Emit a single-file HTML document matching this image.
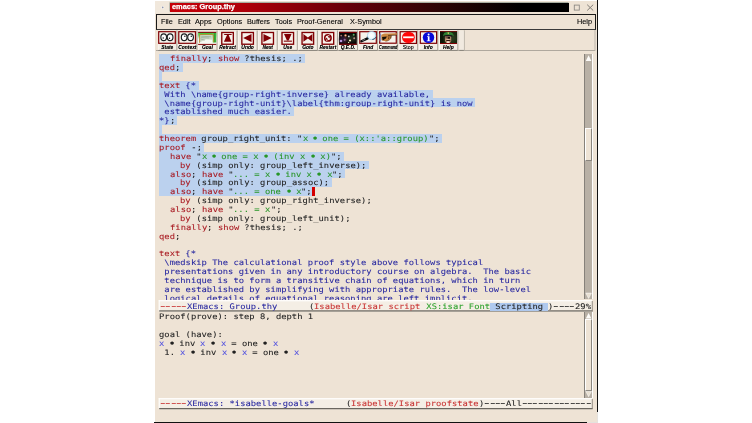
<!DOCTYPE html>
<html><head><meta charset="utf-8"><title>emacs: Group.thy</title>
<style>
html,body{margin:0;padding:0;background:#fff;}
body{width:752px;height:423px;overflow:hidden;position:relative;font-family:"DejaVu Sans Mono","Liberation Mono",monospace;}
#win{position:absolute;left:155px;top:1px;width:442px;height:420.7px;background:#eee3d5;}
#bR{position:absolute;left:597px;top:0;width:1.3px;height:411.6px;background:#111;}
#bR2{position:absolute;left:597px;top:411.6px;width:1.3px;height:11.4px;background:#e4e2de;}
#bB{position:absolute;left:154px;top:421.7px;width:432.7px;height:1.3px;background:#111;}
#bB2{position:absolute;left:586.7px;top:421.7px;width:11.6px;height:1.3px;background:#e4e2de;}
#title{position:absolute;left:169.5px;top:2.7px;width:399.4px;height:9.8px;background:linear-gradient(90deg,#c60008 0%,#b0000a 18%,#64000a 45%,#2c0404 68%,#000 88%,#000 100%);box-shadow:-0.6px -0.6px 0 #7a8a80;}
#ttext{position:absolute;left:171.6px;top:2.4px;height:10.5px;font:bold 7.4px/10.5px "Liberation Sans",sans-serif;color:#fff;white-space:pre;-webkit-text-stroke:0.25px #fff;}
#menu{position:absolute;left:156.4px;top:13.7px;width:437.6px;height:14.2px;border:1px solid #1a1a1a;border-bottom-color:#3a3a3a;box-sizing:content-box;background:#eee3d5;}
.mi{position:absolute;top:15px;height:13px;font:7.3px/13px "Liberation Sans",sans-serif;color:#000;white-space:pre;-webkit-text-stroke:0.1px #000;}
.ln{height:8.88px;line-height:8.88px;white-space:pre;font-size:8.84px;}
.ln span{display:inline-block;height:8.88px;vertical-align:top;}
.hl{background:#bbd1ee;margin-left:-0.5px;padding-left:0.5px;}
.nl{padding-right:2.5px;}
.cur{width:3px;background:#d40000;}
#top,#bot,.ml,.mi,#ttext{will-change:transform;}
#top{position:absolute;left:159.0px;top:53.85px;width:426px;height:246.15px;overflow:hidden;color:#222222;}
#bot{position:absolute;left:159.0px;top:311.65px;width:426px;color:#222222;}
.k,.b,.g,.n,.x,.mr,.mg,.mb{-webkit-text-stroke:0.08px;position:relative;top:0.2px;transform:scaleY(0.86) skewX(0.2deg);transform-origin:0 7px;}
.ln span.bu{width:4.2px;text-align:center;font-size:12px;text-indent:-1.6px;}
.k{color:#a81820;} .b{color:#2828a0;} .g{color:#289628;} .n{color:#222222;} .x{color:#5050e0;}
.ml{position:absolute;left:160px;height:9px;font-size:8.84px;line-height:9px;white-space:pre;color:#222222;}
.ml span{display:inline-block;height:9px;vertical-align:top;}
.ml span.d{transform:scaleX(1.5) scaleY(0.86);transform-origin:50% 7px;-webkit-text-stroke:0.3px;top:-1.0px;}
.ml .mh{height:8px;margin-top:0.5px;line-height:8px;top:0}
.ml .mh span{margin-top:-0.5px}
.mr{color:#c83232;} .mg{color:#2aa02a;} .mb{color:#2828a0;}
.mh{background:#aec8ee;}
.sb{position:absolute;left:584.2px;width:7.8px;background:#b8b0a5;border-left:1.2px solid #86817a;border-right:1.1px solid #fff;box-sizing:border-box;width:9px;}

.tl{position:absolute;top:44.9px;width:24.3px;text-align:center;font:italic bold 4.9px/5px "Liberation Sans",sans-serif;color:#000;white-space:pre;text-shadow:0 0 0.5px rgba(0,0,0,0.5);transform:translateZ(0);}
.thumb{position:absolute;left:0px;width:6.7px;background:#eee3d5;border-top:1px solid #fff;border-left:1px solid #fff;border-right:1px solid #8a857d;border-bottom:1px solid #8a857d;box-sizing:border-box;}
</style></head><body>
<div id="win"></div><div id="bR"></div><div id="bB"></div><div id="bR2"></div><div id="bB2"></div>
<div id="title"></div><div id="ttext">emacs: Group.thy</div>
<svg style="position:absolute;left:0;top:0" width="752" height="423" viewBox="0 0 752 423">
<rect x="155" y="1" width="14.3" height="12" fill="#f1e8dc"/><circle cx="162.7" cy="7.5" r="1.5" fill="#fbf8f4"/><circle cx="162.7" cy="7.4" r="0.85" fill="#8f95ab"/>
<rect x="574.3" y="5.1" width="5" height="5" fill="none" stroke="#8e8a84" stroke-width="0.9"/>
<path d="M587.2 4.7 L593.2 10.5 M593.2 4.7 L587.2 10.5" stroke="#807c76" stroke-width="1" fill="none"/>
</svg>
<div id="menu"></div>
<div class="mi" style="left:160.9px">File</div><div class="mi" style="left:177.8px">Edit</div><div class="mi" style="left:195.2px">Apps</div><div class="mi" style="left:216.9px">Options</div><div class="mi" style="left:246.7px">Buffers</div><div class="mi" style="left:274.5px">Tools</div><div class="mi" style="left:297.0px">Proof-General</div><div class="mi" style="left:349.8px">X-Symbol</div><div class="mi" style="left:576.5px">Help</div>
<svg style="position:absolute;left:0;top:0" width="752" height="423" viewBox="0 0 752 423">
<defs>
<linearGradient id="gg" x1="0" y1="0" x2="0" y2="1"><stop offset="0" stop-color="#38c838"/><stop offset="0.4" stop-color="#58d458"/><stop offset="1" stop-color="#f6f9f2"/></linearGradient>
<linearGradient id="gr" x1="0" y1="0" x2="1" y2="0"><stop offset="0" stop-color="#66d866"/><stop offset="0.6" stop-color="#2c9a2c"/><stop offset="1" stop-color="#49d049"/></linearGradient>
<radialGradient id="lens" cx="0.45" cy="0.45" r="0.6"><stop offset="0" stop-color="#ffffff"/><stop offset="0.6" stop-color="#f0fafe"/><stop offset="1" stop-color="#b4e2f4"/></radialGradient>
<filter id="bl" x="-20%" y="-20%" width="140%" height="140%"><feGaussianBlur stdDeviation="0.45"/></filter><filter id="bl2" x="-30%" y="-30%" width="160%" height="160%"><feGaussianBlur stdDeviation="1.2"/></filter>
<filter id="bl3" x="-20%" y="-20%" width="140%" height="140%"><feGaussianBlur stdDeviation="0.3"/></filter>
</defs>
<rect x="156" y="50.1" width="439" height="0.9" fill="#a8a298"/>
<rect x="594.6" y="30" width="0.8" height="21" fill="#b0aaa0"/>
<rect x="463.8" y="30.3" width="0.8" height="20" fill="#aaa49a"/>
<rect x="158.20" y="30.4" width="18.3" height="19.8" fill="#f3ede4"/>
<rect x="158.20" y="49.9" width="18.6" height="1" fill="#8a857d"/>
<rect x="176.40" y="30.6" width="0.9" height="20" fill="#a49e95"/>
<rect x="157.90" y="30.4" width="0.8" height="19.6" fill="#fbf8f3"/>
<rect x="178.27" y="30.4" width="18.3" height="19.8" fill="#f3ede4"/>
<rect x="178.27" y="49.9" width="18.6" height="1" fill="#8a857d"/>
<rect x="196.47" y="30.6" width="0.9" height="20" fill="#a49e95"/>
<rect x="177.97" y="30.4" width="0.8" height="19.6" fill="#fbf8f3"/>
<rect x="198.34" y="30.4" width="18.3" height="19.8" fill="#f3ede4"/>
<rect x="198.34" y="49.9" width="18.6" height="1" fill="#8a857d"/>
<rect x="216.54" y="30.6" width="0.9" height="20" fill="#a49e95"/>
<rect x="198.04" y="30.4" width="0.8" height="19.6" fill="#fbf8f3"/>
<rect x="218.41" y="30.4" width="18.3" height="19.8" fill="#f3ede4"/>
<rect x="218.41" y="49.9" width="18.6" height="1" fill="#8a857d"/>
<rect x="236.61" y="30.6" width="0.9" height="20" fill="#a49e95"/>
<rect x="218.11" y="30.4" width="0.8" height="19.6" fill="#fbf8f3"/>
<rect x="238.48" y="30.4" width="18.3" height="19.8" fill="#f3ede4"/>
<rect x="238.48" y="49.9" width="18.6" height="1" fill="#8a857d"/>
<rect x="256.68" y="30.6" width="0.9" height="20" fill="#a49e95"/>
<rect x="238.18" y="30.4" width="0.8" height="19.6" fill="#fbf8f3"/>
<rect x="258.55" y="30.4" width="18.3" height="19.8" fill="#f3ede4"/>
<rect x="258.55" y="49.9" width="18.6" height="1" fill="#8a857d"/>
<rect x="276.75" y="30.6" width="0.9" height="20" fill="#a49e95"/>
<rect x="258.25" y="30.4" width="0.8" height="19.6" fill="#fbf8f3"/>
<rect x="278.62" y="30.4" width="18.3" height="19.8" fill="#f3ede4"/>
<rect x="278.62" y="49.9" width="18.6" height="1" fill="#8a857d"/>
<rect x="296.82" y="30.6" width="0.9" height="20" fill="#a49e95"/>
<rect x="278.32" y="30.4" width="0.8" height="19.6" fill="#fbf8f3"/>
<rect x="298.69" y="30.4" width="18.3" height="19.8" fill="#f3ede4"/>
<rect x="298.69" y="49.9" width="18.6" height="1" fill="#8a857d"/>
<rect x="316.89" y="30.6" width="0.9" height="20" fill="#a49e95"/>
<rect x="298.39" y="30.4" width="0.8" height="19.6" fill="#fbf8f3"/>
<rect x="318.76" y="30.4" width="18.3" height="19.8" fill="#f3ede4"/>
<rect x="318.76" y="49.9" width="18.6" height="1" fill="#8a857d"/>
<rect x="336.96" y="30.6" width="0.9" height="20" fill="#a49e95"/>
<rect x="318.46" y="30.4" width="0.8" height="19.6" fill="#fbf8f3"/>
<rect x="338.83" y="30.4" width="18.3" height="19.8" fill="#f3ede4"/>
<rect x="338.83" y="49.9" width="18.6" height="1" fill="#8a857d"/>
<rect x="357.03" y="30.6" width="0.9" height="20" fill="#a49e95"/>
<rect x="338.53" y="30.4" width="0.8" height="19.6" fill="#fbf8f3"/>
<rect x="358.90" y="30.4" width="18.3" height="19.8" fill="#f3ede4"/>
<rect x="358.90" y="49.9" width="18.6" height="1" fill="#8a857d"/>
<rect x="377.10" y="30.6" width="0.9" height="20" fill="#a49e95"/>
<rect x="358.60" y="30.4" width="0.8" height="19.6" fill="#fbf8f3"/>
<rect x="378.97" y="30.4" width="18.3" height="19.8" fill="#f3ede4"/>
<rect x="378.97" y="49.9" width="18.6" height="1" fill="#8a857d"/>
<rect x="397.17" y="30.6" width="0.9" height="20" fill="#a49e95"/>
<rect x="378.67" y="30.4" width="0.8" height="19.6" fill="#fbf8f3"/>
<rect x="399.04" y="30.4" width="18.3" height="19.8" fill="#f3ede4"/>
<rect x="399.04" y="49.9" width="18.6" height="1" fill="#8a857d"/>
<rect x="417.24" y="30.6" width="0.9" height="20" fill="#a49e95"/>
<rect x="398.74" y="30.4" width="0.8" height="19.6" fill="#fbf8f3"/>
<rect x="419.11" y="30.4" width="18.3" height="19.8" fill="#f3ede4"/>
<rect x="419.11" y="49.9" width="18.6" height="1" fill="#8a857d"/>
<rect x="437.31" y="30.6" width="0.9" height="20" fill="#a49e95"/>
<rect x="418.81" y="30.4" width="0.8" height="19.6" fill="#fbf8f3"/>
<rect x="439.18" y="30.4" width="18.3" height="19.8" fill="#f3ede4"/>
<rect x="439.18" y="49.9" width="18.6" height="1" fill="#8a857d"/>
<rect x="457.38" y="30.6" width="0.9" height="20" fill="#a49e95"/>
<rect x="438.88" y="30.4" width="0.8" height="19.6" fill="#fbf8f3"/>
<rect x="459.3" y="30.4" width="4.5" height="19.6" fill="#f1eae0"/><rect x="459.3" y="49.9" width="4.5" height="1" fill="#8a857d"/>
<rect x="158.70" y="31.70" width="16.60" height="11.60" fill="#f7f3ec" stroke="#800004" stroke-width="1.20"/>
<ellipse cx="163.70" cy="37.3" rx="2.85" ry="3.4" fill="#fdfdfd" stroke="#1a1e20" stroke-width="1.15"/>
<ellipse cx="163.20" cy="38.10" rx="0.7" ry="0.75" fill="#0c0c0c"/>
<ellipse cx="170.10" cy="37.3" rx="2.85" ry="3.4" fill="#fdfdfd" stroke="#1a1e20" stroke-width="1.15"/>
<ellipse cx="169.50" cy="38.20" rx="0.7" ry="0.75" fill="#0c0c0c"/>
<rect x="178.77" y="31.70" width="16.70" height="11.60" fill="#f7f3ec" stroke="#800004" stroke-width="1.20"/>
<ellipse cx="184.17" cy="37.3" rx="2.85" ry="3.4" fill="#fdfdfd" stroke="#1a1e20" stroke-width="1.15"/>
<ellipse cx="184.87" cy="36.30" rx="0.7" ry="0.75" fill="#0c0c0c"/>
<ellipse cx="190.57" cy="37.3" rx="2.85" ry="3.4" fill="#fdfdfd" stroke="#1a1e20" stroke-width="1.15"/>
<ellipse cx="191.27" cy="36.30" rx="0.7" ry="0.75" fill="#0c0c0c"/>
<rect x="198.14" y="31.8" width="18.1" height="13.1" fill="#f6f9f2"/>
<rect x="198.14" y="32.6" width="18.1" height="6.5" fill="url(#gg)"/>
<rect x="212.64" y="33" width="3.6" height="9.5" fill="url(#gr)"/>
<polygon points="199.94,35 212.74,35 212.74,39.8 206.14,39.2 199.94,42.2" fill="#c9d6c4"/>
<path d="M201.14 36.2 l10 0.6 M201.14 37.6 l8 0.4 M200.74 39 l4 1.2" fill="none" stroke="#8ea08c" stroke-width="0.6"/>
<path d="M199.54 42.8 L199.74 34.5 L213.24 34.4 L213.74 42.3" fill="none" stroke="#b88a30" stroke-width="0.9"/>
<rect x="198.14" y="31.8" width="18.1" height="1.1" fill="#800004"/><rect x="198.14" y="43.9" width="18.1" height="1.0" fill="#800004"/>
<rect x="221.78" y="32.48" width="11.55" height="11.75" fill="#f7f3ec" stroke="#800004" stroke-width="1.35"/>
<path d="M223.71 34.1 h7.9 v0.9 h-2.9 L231.41 41.8 h-7.5 L227.01 35 h-2.5 z" fill="#800004"/>
<rect x="241.85" y="32.48" width="11.55" height="11.75" fill="#f7f3ec" stroke="#800004" stroke-width="1.35"/>
<path d="M243.18 38 L251.48 34.0 V41.9 z" fill="#800004"/>
<rect x="261.92" y="32.48" width="11.55" height="11.75" fill="#f7f3ec" stroke="#800004" stroke-width="1.35"/>
<path d="M271.65 38 L263.45 34.0 V41.9 z" fill="#800004"/>
<rect x="282.00" y="32.48" width="11.55" height="11.75" fill="#f7f3ec" stroke="#800004" stroke-width="1.35"/>
<path d="M284.02 34.1 h7.5 L288.62 40.6 h-1.7 z" fill="#800004"/><rect x="283.82" y="40.6" width="8.1" height="1.1" fill="#800004"/>
<rect x="302.06" y="32.48" width="11.55" height="11.75" fill="#f7f3ec" stroke="#800004" stroke-width="1.35"/>
<path d="M303.39 34.1 L307.89 37.5 L312.39 34.1 V41.8 L307.89 38.5 L303.39 41.8 z" fill="#800004"/>
<rect x="322.13" y="32.48" width="11.55" height="11.75" fill="#f7f3ec" stroke="#800004" stroke-width="1.35"/>
<circle cx="327.91" cy="37.9" r="3.2" fill="none" stroke="#800004" stroke-width="1.5"/>
<path d="M329.51 35.0 L326.71 37.6 L329.11 38.2 L326.31 40.8" fill="none" stroke="#f7f3ec" stroke-width="1.0"/>
<path d="M327.71 36.1 l2.6 0.2 l-1.0 2.1 z M328.11 39.7 l-2.6 -0.2 l1.0 -2.1 z" fill="#800004"/>
<rect x="339.10" y="31.8" width="17.7" height="13.0" fill="#0a0606"/>
<g filter="url(#bl2)"><ellipse cx="343.5" cy="39.5" rx="4" ry="3.5" fill="#2c1834"/><ellipse cx="352" cy="38.5" rx="4" ry="3.5" fill="#20281a"/><rect x="345" y="36" width="1.2" height="6" fill="#5a3020"/><path d="M353.5 35 L349 39" stroke="#2c4a2c" stroke-width="1"/></g>
<g filter="url(#bl)">
<circle cx="341.20" cy="35.60" r="0.90" fill="#a87a6a"/>
<circle cx="345.50" cy="35.40" r="1.15" fill="#f8a068"/>
<circle cx="348.80" cy="36.40" r="0.90" fill="#d0d0d0"/>
<circle cx="353.70" cy="34.80" r="0.95" fill="#5cb468"/>
<circle cx="354.20" cy="38.30" r="1.00" fill="#b89484"/>
<circle cx="341.00" cy="41.00" r="1.30" fill="#b896dc"/>
<circle cx="344.70" cy="39.80" r="1.10" fill="#8e6498"/>
<circle cx="350.00" cy="40.50" r="1.10" fill="#f8f0b8"/>
<circle cx="348.60" cy="42.40" r="0.70" fill="#d8d8b0"/>
</g>
<circle cx="345.5" cy="35.4" r="0.4" fill="#fff"/><circle cx="350" cy="40.5" r="0.4" fill="#fff"/>
<rect x="339.10" y="31.8" width="17.7" height="1.1" fill="#800004"/><rect x="339.10" y="43.7" width="17.7" height="1.1" fill="#800004"/>
<rect x="359.80" y="31.70" width="16.50" height="11.60" fill="#f7f3ec" stroke="#800004" stroke-width="1.20"/>
<path d="M361.40 41.3 L367.60 38.4" stroke="#0a0a0a" stroke-width="2.3" stroke-linecap="round"/>
<path d="M362.40 40.6 L365.20 39.4" stroke="#c8d8e0" stroke-width="0.6"/>
<circle cx="371.60" cy="35.6" r="4.1" fill="url(#lens)" stroke="#9cc8e4" stroke-width="0.7"/>
<path d="M372.40 39.5 a4.1 4.1 0 0 0 3.6 -2.4" fill="none" stroke="#1c3c5c" stroke-width="0.9"/>
<path d="M368.80 39.0 a4.1 4.1 0 0 1 -1.6 -2.4" fill="none" stroke="#30506c" stroke-width="0.7"/>
<rect x="379.67" y="31.70" width="16.60" height="11.50" fill="#f7f3ec" stroke="#800004" stroke-width="1.20"/>
<rect x="379.47" y="33.6" width="1.7" height="7.8" fill="#8088b8"/>
<path d="M381.27 35 C383.07 33.4 385.07 33.6 388.07 33.6 L396.47 33.3 C397.67 33.4 397.67 34.6 396.47 34.8 L391.47 35.3 C391.37 38 389.57 40.8 385.57 41.2 C383.57 41.2 382.07 40.6 381.27 39.6 z" fill="#cc8640"/>
<path d="M388.07 35.4 L396.47 35.2" stroke="#3a1c08" stroke-width="0.7"/>
<path d="M382.07 37.0 L386.87 36.4 L385.87 38.6 L382.67 40.4 z" fill="#140c04"/>
<path d="M388.07 36.2 q1.2 1.4 0.2 3.2 M389.87 36.0 q1.0 1.2 0.2 2.6" stroke="#3a1c08" stroke-width="0.6" fill="none"/>
<path d="M385.57 41.2 C389.57 40.8 391.37 38.6 391.47 35.6" stroke="#5a3010" stroke-width="0.6" fill="none"/>
<rect x="400.14" y="31.70" width="16.30" height="11.70" fill="#f7f3ec" stroke="#800004" stroke-width="1.20"/>
<ellipse cx="408.44" cy="37.4" rx="6.4" ry="5.7" fill="#ff0808"/>
<rect x="403.14" y="36.4" width="10.6" height="1.8" fill="#fff"/>
<rect x="420.31" y="31.70" width="16.30" height="11.60" fill="#f7f3ec" stroke="#800004" stroke-width="1.20"/>
<ellipse cx="428.51" cy="37.5" rx="5.7" ry="5.5" fill="#0808d8"/>
<circle cx="428.61" cy="34.5" r="0.95" fill="#fff"/>
<path d="M427.11 36.2 h2.4 v4.2 h1.1 v0.9 h-3.9 v-0.9 h1.1 v-3.3 h-0.7 z" fill="#fff"/>
<rect x="440.00" y="31.1" width="17.0" height="12.8" fill="#1a2810"/>
<rect x="440.00" y="31.1" width="3.6" height="12.8" fill="#0c1608"/>
<ellipse cx="450" cy="38" rx="6" ry="5" fill="#2c3a1a" filter="url(#bl2)"/>
<g filter="url(#bl3)">
<path d="M442.8 36.0 C443.6 31.0 453.0 31.0 454.0 36.0 C451 34.6 446 34.6 442.8 36.0 z" fill="#2a7a2e"/>
<path d="M444.2 33.6 C446 32.2 450.5 32.2 452.6 33.6" stroke="#3c9a40" stroke-width="0.7" fill="none"/>
<rect x="447.7" y="32.3" width="1.2" height="1.8" fill="#c8c060"/>
<path d="M444.4 35.6 C446.5 34.8 450 34.8 452.2 35.6 L452 36.7 H444.6 z" fill="#161018"/>
<path d="M445 36.4 h6.2 v4.2 c0 3.4 -6.2 3.4 -6.2 0 z" fill="#b88a6e"/>
<ellipse cx="448" cy="40" rx="1.6" ry="2.6" fill="#dcb89c"/>
<ellipse cx="448.1" cy="42.4" rx="1.5" ry="0.8" fill="#ecdccc"/>
<rect x="447.3" y="37" width="2.8" height="1.7" rx="0.5" fill="#120c0a"/><rect x="445.5" y="37.2" width="1.3" height="1.2" fill="#4a3020"/>
<path d="M446 40.4 C447 39.8 449.5 39.8 450.6 40.4 V41.3 C449.5 40.8 447 40.8 446 41.3 z" fill="#2a1810"/>
</g>
<rect x="440.00" y="31.0" width="17.0" height="0.7" fill="#800004"/><rect x="440.00" y="43.0" width="17.0" height="1.0" fill="#800004"/>
</svg>
<div class="tl" style="left:155.20px;">State</div>
<div class="tl" style="left:175.27px;">Context</div>
<div class="tl" style="left:195.34px;">Goal</div>
<div class="tl" style="left:215.41px;">Retract</div>
<div class="tl" style="left:235.48px;">Undo</div>
<div class="tl" style="left:255.55px;">Next</div>
<div class="tl" style="left:275.62px;">Use</div>
<div class="tl" style="left:295.69px;">Goto</div>
<div class="tl" style="left:315.76px;">Restart</div>
<div class="tl" style="left:335.83px;">Q.E.D.</div>
<div class="tl" style="left:355.90px;">Find</div>
<div class="tl" style="left:375.97px;transform:translateZ(0) scaleX(0.77);">Command</div>
<div class="tl" style="left:396.04px;font-style:normal;font-weight:normal;font-size:5.2px;">Stop</div>
<div class="tl" style="left:416.11px;">Info</div>
<div class="tl" style="left:436.18px;">Help</div>
<svg style="position:absolute;left:0;top:0" width="752" height="423" viewBox="0 0 752 423"><rect x="158.7" y="300.20" width="433.6" height="11.30" fill="#f4eee5"/><rect x="158.7" y="300.20" width="433.6" height="1.1" fill="#fff"/><rect x="158.7" y="300.20" width="1" height="10.30" fill="#fff"/><rect x="159.2" y="310.30" width="433.4" height="1.25" fill="#6a665f"/><rect x="591.8" y="301.00" width="0.9" height="10.30" fill="#8a857d"/><rect x="158.7" y="398.20" width="433.6" height="11.00" fill="#f4eee5"/><rect x="158.7" y="398.20" width="433.6" height="1.1" fill="#fff"/><rect x="158.7" y="398.20" width="1" height="10.00" fill="#fff"/><rect x="159.2" y="408.00" width="433.4" height="1.25" fill="#6a665f"/><rect x="591.8" y="399.00" width="0.9" height="10.00" fill="#8a857d"/></svg>
<div id="top">
<div class="ln"><span class="hl nl"><span class="n">  </span><span class="k">finally</span><span class="n">; </span><span class="k">show</span><span class="n"> ?thesis; .;</span></span></div>
<div class="ln"><span class="hl nl"><span class="k">qed</span><span class="n">;</span></span></div>
<div class="ln"><span class="hl nl"></span></div>
<div class="ln"><span class="hl nl"><span class="k">text</span><span class="b"> {*</span></span></div>
<div class="ln"><span class="hl nl"><span class="b"> With \name{group-right-inverse} already available,</span></span></div>
<div class="ln"><span class="hl nl"><span class="b"> \name{group-right-unit}\label{thm:group-right-unit} is now</span></span></div>
<div class="ln"><span class="hl nl"><span class="b"> established much easier.</span></span></div>
<div class="ln"><span class="hl nl"><span class="b">*}</span><span class="n">;</span></span></div>
<div class="ln"><span class="hl nl"></span></div>
<div class="ln"><span class="hl nl"><span class="k">theorem</span><span class="n"> group_right_unit: "</span><span class="g">x </span><span class="g bu">•</span><span class="g"> one = (x::'a::group)</span><span class="n">";</span></span></div>
<div class="ln"><span class="hl nl"><span class="k">proof</span><span class="n"> -;</span></span></div>
<div class="ln"><span class="hl nl"><span class="n">  </span><span class="k">have</span><span class="n"> "</span><span class="g">x </span><span class="g bu">•</span><span class="g"> one = x </span><span class="g bu">•</span><span class="g"> (inv x </span><span class="g bu">•</span><span class="g"> x)</span><span class="n">";</span></span></div>
<div class="ln"><span class="hl nl"><span class="n">    </span><span class="k">by</span><span class="n"> (simp only: group_left_inverse);</span></span></div>
<div class="ln"><span class="hl nl"><span class="n">  </span><span class="k">also</span><span class="n">; </span><span class="k">have</span><span class="n"> "</span><span class="g">... = x </span><span class="g bu">•</span><span class="g"> inv x </span><span class="g bu">•</span><span class="g"> x</span><span class="n">";</span></span></div>
<div class="ln"><span class="hl nl"><span class="n">    </span><span class="k">by</span><span class="n"> (simp only: group_assoc);</span></span></div>
<div class="ln"><span class="hl"><span class="n">  </span><span class="k">also</span><span class="n">; </span><span class="k">have</span><span class="n"> "</span><span class="g">... = one </span><span class="g bu">•</span><span class="g"> x</span><span class="n">";</span></span><span class="cur"></span></div>
<div class="ln"><span class="n">    </span><span class="k">by</span><span class="n"> (simp only: group_right_inverse);</span></div>
<div class="ln"><span class="n">  </span><span class="k">also</span><span class="n">; </span><span class="k">have</span><span class="n"> "</span><span class="g">... = x</span><span class="n">";</span></div>
<div class="ln"><span class="n">    </span><span class="k">by</span><span class="n"> (simp only: group_left_unit);</span></div>
<div class="ln"><span class="n">  </span><span class="k">finally</span><span class="n">; </span><span class="k">show</span><span class="n"> ?thesis; .;</span></div>
<div class="ln"><span class="k">qed</span><span class="n">;</span></div>
<div class="ln"></div>
<div class="ln"><span class="k">text</span><span class="b"> {*</span></div>
<div class="ln"><span class="b"> \medskip The calculational proof style above follows typical</span></div>
<div class="ln"><span class="b"> presentations given in any introductory course on algebra.  The basic</span></div>
<div class="ln"><span class="b"> technique is to form a transitive chain of equations, which in turn</span></div>
<div class="ln"><span class="b"> are established by simplifying with appropriate rules.  The low-level</span></div>
<div class="ln"><span class="b"> logical details of equational reasoning are left implicit.</span></div>
</div>
<div class="ml" style="top:301.7px"><span class="mr d">-</span><span class="mr d">-</span><span class="mr d">-</span><span class="mr d">-</span><span class="mr d">-</span><span class="mb">XEmacs: Group.thy</span><span class="n">      (</span><span class="mr">Isabelle/Isar script</span><span class="mg"> XS:isar Font</span><span class="mh"><span class="n"> Scripting </span></span><span class="n">)</span><span class="n d">-</span><span class="n d">-</span><span class="n d">-</span><span class="n d">-</span><span class="n">29%</span></div>
<div id="bot">
<div class="ln"><span class="n">Proof(prove): step 8, depth 1</span></div>
<div class="ln"></div>
<div class="ln"><span class="n">goal (have):</span></div>
<div class="ln"><span class="x">x</span><span class="n"> </span><span class="n bu">•</span><span class="n"> inv </span><span class="x">x</span><span class="n"> </span><span class="n bu">•</span><span class="n"> </span><span class="x">x</span><span class="n"> = one </span><span class="n bu">•</span><span class="n"> </span><span class="x">x</span></div>
<div class="ln"><span class="n"> 1. </span><span class="x">x</span><span class="n"> </span><span class="n bu">•</span><span class="n"> inv </span><span class="x">x</span><span class="n"> </span><span class="n bu">•</span><span class="n"> </span><span class="x">x</span><span class="n"> = one </span><span class="n bu">•</span><span class="n"> </span><span class="x">x</span></div>
</div>
<div class="ml" style="top:399.3px"><span class="mr d">-</span><span class="mr d">-</span><span class="mr d">-</span><span class="mr d">-</span><span class="mr d">-</span><span class="mb">XEmacs: *isabelle-goals*</span><span class="n">      (</span><span class="mr">Isabelle/Isar proofstate</span><span class="n">)</span><span class="n d">-</span><span class="n d">-</span><span class="n d">-</span><span class="n d">-</span><span class="n">All</span><span class="n d">-</span><span class="n d">-</span><span class="n d">-</span><span class="n d">-</span><span class="n d">-</span><span class="n d">-</span><span class="n d">-</span><span class="n d">-</span><span class="n d">-</span><span class="n d">-</span><span class="n d">-</span><span class="n d">-</span><span class="n d">-</span></div>
<div class="sb" style="top:54px;height:245.2px"><div class="thumb" style="top:73.8px;height:33.3px"></div></div>
<div class="sb" style="top:312px;height:85.5px;background:#b8b0a5"><div class="thumb" style="top:6.8px;height:72px"></div></div>
<svg style="position:absolute;left:0;top:0" width="752" height="423" viewBox="0 0 752 423">
<path d="M588.6 55.3 L591.4 60.9 H585.8 z" fill="#fdfcfa"/>
<path d="M588.6 298.5 L591.4 293.1 H585.8 z" fill="#e9e0d2" stroke="#fff" stroke-width="0.5"/>
<path d="M588.6 312.9 L591.4 318.4 H585.8 z" fill="#fdfcfa"/>
<path d="M588.6 396.7 L591.4 391.4 H585.8 z" fill="#e9e0d2" stroke="#fff" stroke-width="0.5"/>
</svg>
</body></html>
